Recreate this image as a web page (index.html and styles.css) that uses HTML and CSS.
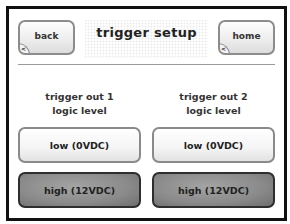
FILE: index.html
```html
<!DOCTYPE html>
<html lang="en">
<head>
    <meta charset="UTF-8">
    <title>trigger setup</title>
    <link rel="stylesheet" href="styles.css">
</head>
<body>
<div class="frame">
    <div class="header">
        <button class="nav-btn">back<span class="notch">&lt;</span></button>
        <h1 class="title">trigger setup</h1>
        <button class="nav-btn">home<span class="notch">&lt;</span></button>
    </div>
    <div class="rule"></div>
    <div class="columns">
        <div class="col">
            <p class="label">trigger out 1<br>logic level</p>
            <button class="opt low">low (0VDC)</button>
            <button class="opt high">high (12VDC)</button>
        </div>
        <div class="col">
            <p class="label">trigger out 2<br>logic level</p>
            <button class="opt low">low (0VDC)</button>
            <button class="opt high">high (12VDC)</button>
        </div>
    </div>
</div>
</body>
</html>
```
FILE: styles.css
```css
*{
    margin: 0;
    box-sizing: border-box;
}

body{
    background: #fff;
    font-family: "DejaVu Sans", sans-serif;
    color: #333;
}

.frame{
    margin: 6px 0 0 6px;
    width: 281px;
    height: 215px;
    border: 3px solid #111;
    background: #fff;
    padding: 11px 9px 0 9px;
}

.header{
    display: flex;
    justify-content: space-between;
    align-items: flex-start;
    height: 35px;
}

.nav-btn{
    position: relative;
    width: 57px;
    height: 35px;
    border: 2px solid #8c8c8c;
    border-radius: 7px;
    background: linear-gradient(#fdfdfd, #ececec 60%, #dcdcdc);
    font-family: "DejaVu Sans", sans-serif;
    font-weight: bold;
    font-size: 9px;
    color: #333;
    padding: 0 0 3px 0;
    overflow: hidden;
}

.notch{
    position: absolute;
    left: -2px;
    bottom: -2px;
    width: 12px;
    height: 12px;
    border: 1.5px solid #8c8c8c;
    border-radius: 0 12px 0 6px;
    background: #f4f4f4;
    font-size: 6px;
    line-height: 10px;
    text-align: left;
    padding-left: 2px;
}

.title{
    font-size: 13px;
    font-weight: bold;
    letter-spacing: 0.3px;
    color: #222;
    padding-top: 5px;
    height: 38px;
    flex: 1;
    text-align: center;
    background-image:
        linear-gradient(rgba(0,0,0,0.035) 1px, transparent 1px),
        linear-gradient(90deg, rgba(0,0,0,0.035) 1px, transparent 1px);
    background-size: 3px 3px;
    margin: 0 10px;
}

.rule{
    height: 1px;
    background: #9a9a9a;
    margin-top: 9px;
}

.columns{
    display: flex;
    gap: 11px;
    margin-top: 24px;
}

.col{
    flex: 1;
    display: flex;
    flex-direction: column;
    gap: 9px;
}

.label{
    text-align: center;
    font-size: 9.5px;
    font-weight: bold;
    line-height: 14px;
    color: #333;
    margin-top: 1px;
}

.opt{
    height: 36px;
    border-radius: 7px;
    font-family: "DejaVu Sans", sans-serif;
    font-weight: bold;
    font-size: 9.5px;
    color: #222;
}

.low{
    border: 2px solid #8a8a8a;
    background: linear-gradient(#fff, #f4f4f4 60%, #e2e2e2);
}

.high{
    border: 2px solid #2e2e2e;
    background: radial-gradient(ellipse at 45% 40%, #a4a4a4, #8a8a8a 60%, #6e6e6e);
}
```
